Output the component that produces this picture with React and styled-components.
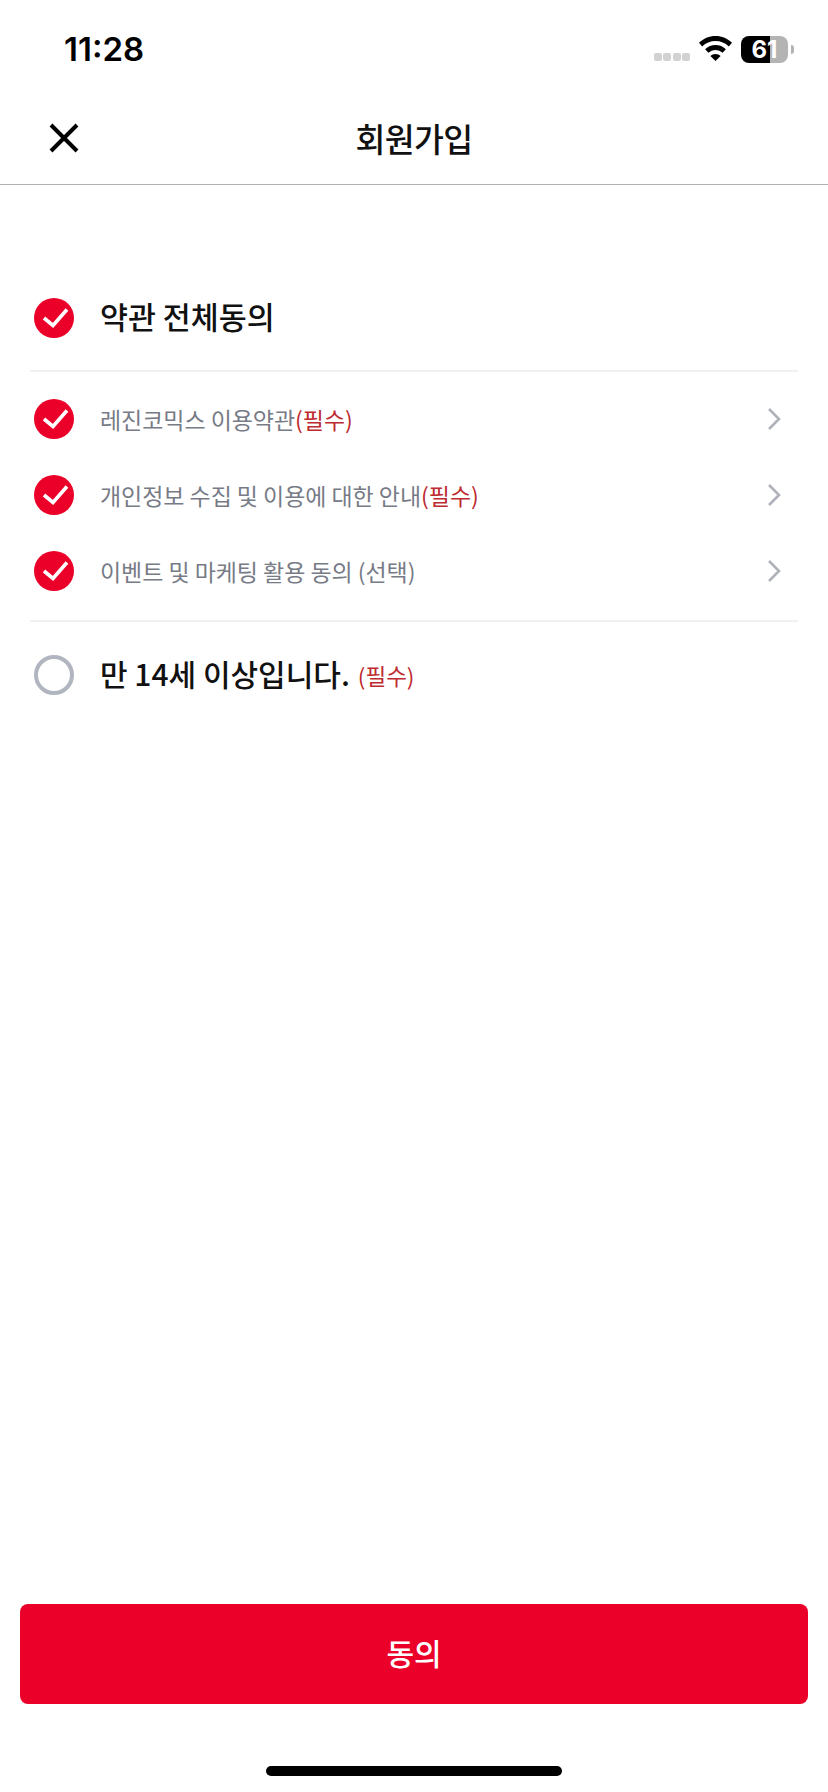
import React from 'react';
import styled, { createGlobalStyle } from 'styled-components';

const GlobalStyle = createGlobalStyle`
  html, body {
    margin: 0;
    padding: 0;
    background: #fff;
  }
  body {
    font-family: 'Noto Sans CJK KR', 'Noto Sans', sans-serif;
  }
`;

const Page = styled.div`
  width: 828px;
  height: 1792px;
  display: flex;
  flex-direction: column;
  background: #fff;
  color: #111;
  overflow: hidden;
`;

const StatusBar = styled.div`
  height: 92px;
  flex: none;
  display: flex;
  align-items: flex-start;
  justify-content: space-between;
  padding: 0 34px 0 64px;
  box-sizing: border-box;
`;

const Time = styled.div`
  margin-top: 29px;
  font-family: Inter, 'Liberation Sans', sans-serif;
  font-size: 33px;
  line-height: 40px;
  font-weight: 600;
  color: #000;
`;

const StatusIcons = styled.div`
  margin-top: 36px;
  display: flex;
  align-items: flex-start;
`;

const SignalDots = styled.div`
  display: flex;
  gap: 1.5px;
  margin-top: 17px;
  margin-right: 9px;
`;

const SignalDot = styled.span`
  width: 8px;
  height: 8px;
  border-radius: 2px;
  background: #d2d2d2;
`;

const Wifi = styled.svg`
  width: 33px;
  height: 25px;
  margin-right: 9px;
  display: block;
`;

const Battery = styled.div`
  width: 47px;
  height: 27px;
  border-radius: 8px;
  background: linear-gradient(90deg, #000 0 29px, #b4b4b4 29px);
  color: #fff;
  font-family: Inter, 'Liberation Sans', sans-serif;
  font-size: 24px;
  line-height: 27px;
  font-weight: 700;
  display: flex;
  justify-content: center;
`;

const BatteryCap = styled.span`
  width: 3px;
  height: 9px;
  margin: 9px 0 0 3px;
  border-radius: 0 3px 3px 0;
  background: #b4b4b4;
`;

const Header = styled.header`
  position: relative;
  height: 93px;
  flex: none;
  display: flex;
  align-items: center;
  justify-content: center;
  border-bottom: 1px solid #b2b2b2;
  box-sizing: border-box;
`;

const CloseButton = styled.button`
  position: absolute;
  left: 48px;
  top: 30px;
  width: 32px;
  height: 32px;
  padding: 0;
  border: 0;
  background: none;
`;

const Title = styled.h1`
  margin: 0;
  font-size: 32.5px;
  line-height: 44px;
  font-weight: 500;
  letter-spacing: -0.6px;
  color: #111;
`;

const Content = styled.main`
  flex: 1;
  padding: 113px 30px 0;
`;

const Row = styled.div`
  display: flex;
  align-items: center;
  height: 40px;
  padding-left: 4px;
`;

const Group = styled.div`
  display: flex;
  flex-direction: column;
  gap: 36px;
  padding: 27px 0 29px;
  margin: 32px 0 0;
  border-top: 2px solid #f0f0f2;
  border-bottom: 2px solid #f0f0f2;
`;

const LastRow = styled(Row)`
  margin-top: 33px;
`;

const Check = styled.svg`
  width: 40px;
  height: 40px;
  flex: none;
  margin-right: 26px;
  display: block;
`;

const Label = styled.span`
  font-size: ${props => (props.wide ? '30.4px' : '30px')};
  line-height: 40px;
  font-weight: 500;
  color: #111;
  padding-bottom: 4px;
`;

const TermLabel = styled.span`
  flex: 1;
  font-size: 23px;
  line-height: 40px;
  font-weight: 400;
  letter-spacing: -0.05px;
  color: #777b86;
`;

const Required = styled.span`
  font-size: ${props => (props.small ? '22.5px' : '23px')};
  font-weight: 400;
  color: #bd2a30;
  margin-left: ${props => (props.small ? '8px' : '0')};
`;

const Chevron = styled.svg`
  width: 14px;
  height: 24px;
  flex: none;
  margin-right: 17px;
  display: block;
`;

const Footer = styled.footer`
  flex: none;
  padding: 0 20px;
`;

const AgreeButton = styled.button`
  width: 100%;
  height: 100px;
  display: block;
  border: 0;
  border-radius: 8px;
  padding: 0 0 4px;
  background: #eb0029;
  color: #fff;
  font-family: inherit;
  font-size: 30px;
  font-weight: 500;
`;

const HomeBar = styled.div`
  width: 296px;
  height: 10px;
  margin: 62px auto 16px;
  border-radius: 5px;
  background: #000;
`;

const CheckIcon = ({ checked }) => (
  <Check viewBox="0 0 40 40">
    {checked ? (
      <>
        <circle cx="20" cy="20" r="20" fill="#eb0029" />
        <path d="M10 20l9 7.500L33 11.500" fill="none" stroke="#fff" strokeWidth="3.600" />
      </>
    ) : (
      <circle cx="20" cy="20" r="18" fill="none" stroke="#b0b5bf" strokeWidth="4" />
    )}
  </Check>
);

const ChevronIcon = () => (
  <Chevron viewBox="0 0 14 24">
    <path d="M2 2l10 10L2 22" fill="none" stroke="#afb2b9" strokeWidth="2.600" />
  </Chevron>
);

const terms = [
  { id: 'service', text: '레진코믹스 이용약관', required: true },
  { id: 'privacy', text: '개인정보 수집 및 이용에 대한 안내', required: true },
  { id: 'marketing', text: '이벤트 및 마케팅 활용 동의 (선택)', required: false },
];

const App = () => (
  <Page>
    <GlobalStyle />
    <StatusBar>
      <Time>11:28</Time>
      <StatusIcons>
        <SignalDots>
          <SignalDot />
          <SignalDot />
          <SignalDot />
          <SignalDot />
        </SignalDots>
        <Wifi viewBox="0 0 33 25">
          <path d="M16.500 0C10 0 4.500 2.600 0 6.800l3.200 3.600C6.800 7 11.400 5 16.500 5s9.700 2 13.300 5.400L33 6.800C28.500 2.600 23 0 16.500 0z" />
          <path d="M16.500 9c-4 0-7.600 1.500-10.400 4.200l3.300 3.600c1.900-1.800 4.400-2.900 7.100-2.900s5.200 1.100 7.100 2.900l3.300-3.600C24.100 10.500 20.500 9 16.500 9z" />
          <path d="M16.500 18c-2 0-3.800.8-5.100 2l5.100 5 5.100-5c-1.300-1.200-3.100-2-5.100-2z" />
        </Wifi>
        <Battery>61</Battery>
        <BatteryCap />
      </StatusIcons>
    </StatusBar>
    <Header>
      <CloseButton aria-label="닫기">
        <svg width="32" height="32" viewBox="0 0 32 32">
          <path d="M3 3l26 26M29 3L3 29" fill="none" stroke="#000" strokeWidth="4" />
        </svg>
      </CloseButton>
      <Title>회원가입</Title>
    </Header>
    <Content>
      <Row>
        <CheckIcon checked />
        <Label wide>약관 전체동의</Label>
      </Row>
      <Group>
        {terms.map(term => (
          <Row key={term.id}>
            <CheckIcon checked />
            <TermLabel>
              {term.text}
              {term.required && <Required>(필수)</Required>}
            </TermLabel>
            <ChevronIcon />
          </Row>
        ))}
      </Group>
      <LastRow>
        <CheckIcon />
        <Label>만 14세 이상입니다.</Label>
        <Required small>(필수)</Required>
      </LastRow>
    </Content>
    <Footer>
      <AgreeButton>동의</AgreeButton>
      <HomeBar />
    </Footer>
  </Page>
);

export default App;
